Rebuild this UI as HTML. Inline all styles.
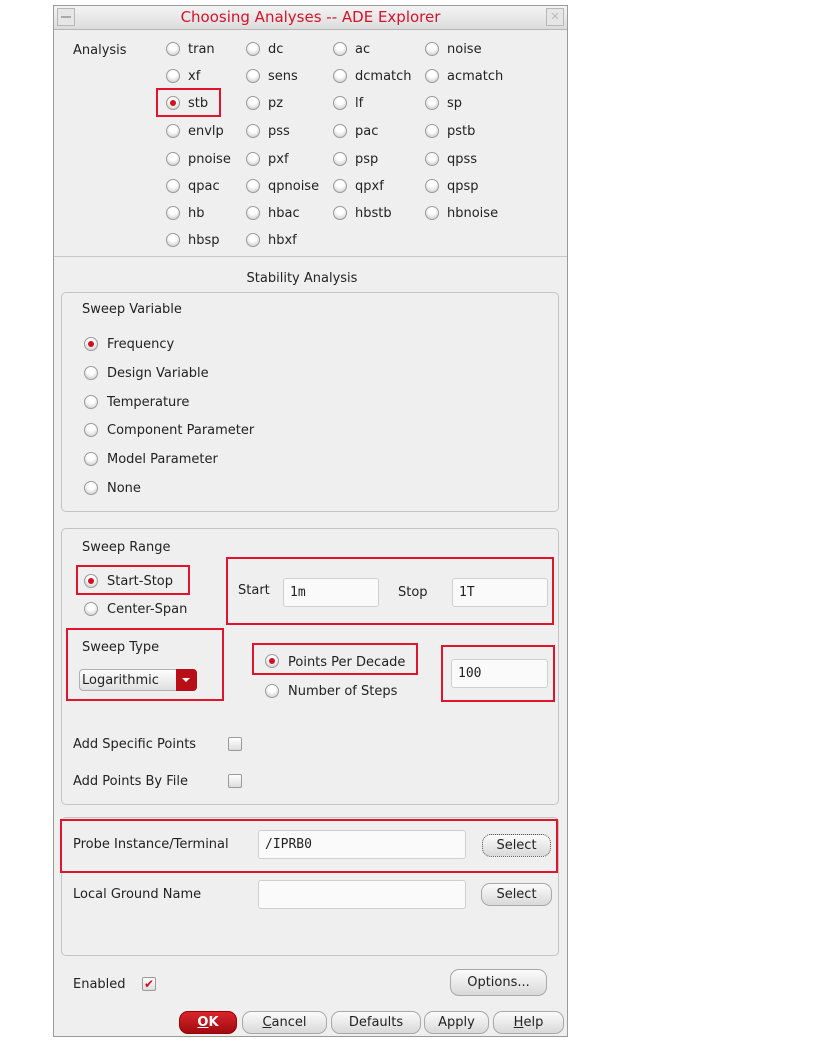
<!DOCTYPE html>
<html><head><meta charset="utf-8"><style>
body{margin:0;width:828px;height:1048px;background:#fff;position:relative;overflow:hidden;font-family:"DejaVu Sans","Liberation Sans",sans-serif;font-size:13px;color:#222}
.win{position:absolute;left:53px;top:5px;width:515px;height:1032px;background:#efefef;border:1px solid #9a9a9a;box-sizing:border-box}
.title{position:absolute;left:0;top:0;width:513px;height:23px;background:linear-gradient(#f4f4f4,#dcdcdc);border-bottom:1px solid #b5b5b5;color:#d4142a;font-size:15px;text-align:center;line-height:23px}
.tb{position:absolute;top:2px;width:18px;height:18px;border:1px solid #b8b8b8;background:#e6e6e6;box-sizing:border-box}
.t{position:absolute;white-space:nowrap;line-height:15px}
.r{position:absolute;width:14px;height:14px;border-radius:50%;background:radial-gradient(circle at 50% 30%,#fff 35%,#c4c4c4 100%);border:1px solid #9a9a9a;box-sizing:border-box;margin:-1px 0 0 -1px}
.r.s::after{content:"";position:absolute;left:3px;top:3px;width:6px;height:6px;border-radius:50%;background:#d0101c}
.grp{position:absolute;border:1px solid #c4c4c4;border-radius:5px;box-sizing:border-box}
.red{position:absolute;border:2px solid #e0142c;box-sizing:border-box}
.in{position:absolute;background:#fafafa;border:1px solid #cfcfcf;border-radius:3px;box-sizing:border-box;font-family:"DejaVu Sans Mono","Liberation Mono",monospace;font-size:13px;padding:0 0 0 6px}
.btn{position:absolute;height:23px;border:1px solid #a8a8a8;border-radius:9px;background:linear-gradient(#fbfbfb,#d9d9d9);box-sizing:border-box;text-align:center;line-height:21px}
.cb{position:absolute;width:14px;height:14px;border:1px solid #9a9a9a;border-radius:2px;background:linear-gradient(#fff,#ddd);box-sizing:border-box}
</style></head><body>
<div class="win">
<div class="title">Choosing Analyses -- ADE Explorer</div>
<div class="tb" style="left:3px"><div style="position:absolute;left:3px;top:7px;width:10px;height:2px;background:#aaa"></div></div>
<div class="tb" style="left:492px;color:#bbb;font-size:11px;text-align:center;line-height:16px">✕</div>
</div>

<div class="t" style="left:73px;top:43px">Analysis</div>
<div class="r" style="left:167px;top:43px"></div><div class="t" style="left:188px;top:42px">tran</div>
<div class="r" style="left:167px;top:70px"></div><div class="t" style="left:188px;top:69px">xf</div>
<div class="r s" style="left:167px;top:97px"></div><div class="t" style="left:188px;top:96px">stb</div>
<div class="r" style="left:167px;top:125px"></div><div class="t" style="left:188px;top:124px">envlp</div>
<div class="r" style="left:167px;top:153px"></div><div class="t" style="left:188px;top:152px">pnoise</div>
<div class="r" style="left:167px;top:180px"></div><div class="t" style="left:188px;top:179px">qpac</div>
<div class="r" style="left:167px;top:207px"></div><div class="t" style="left:188px;top:206px">hb</div>
<div class="r" style="left:167px;top:234px"></div><div class="t" style="left:188px;top:233px">hbsp</div>
<div class="red" style="left:156px;top:88px;width:65px;height:29px"></div>
<div class="r" style="left:247px;top:43px"></div><div class="t" style="left:268px;top:42px">dc</div>
<div class="r" style="left:247px;top:70px"></div><div class="t" style="left:268px;top:69px">sens</div>
<div class="r" style="left:247px;top:97px"></div><div class="t" style="left:268px;top:96px">pz</div>
<div class="r" style="left:247px;top:125px"></div><div class="t" style="left:268px;top:124px">pss</div>
<div class="r" style="left:247px;top:153px"></div><div class="t" style="left:268px;top:152px">pxf</div>
<div class="r" style="left:247px;top:180px"></div><div class="t" style="left:268px;top:179px">qpnoise</div>
<div class="r" style="left:247px;top:207px"></div><div class="t" style="left:268px;top:206px">hbac</div>
<div class="r" style="left:247px;top:234px"></div><div class="t" style="left:268px;top:233px">hbxf</div>
<div class="r" style="left:334px;top:43px"></div><div class="t" style="left:355px;top:42px">ac</div>
<div class="r" style="left:334px;top:70px"></div><div class="t" style="left:355px;top:69px">dcmatch</div>
<div class="r" style="left:334px;top:97px"></div><div class="t" style="left:355px;top:96px">lf</div>
<div class="r" style="left:334px;top:125px"></div><div class="t" style="left:355px;top:124px">pac</div>
<div class="r" style="left:334px;top:153px"></div><div class="t" style="left:355px;top:152px">psp</div>
<div class="r" style="left:334px;top:180px"></div><div class="t" style="left:355px;top:179px">qpxf</div>
<div class="r" style="left:334px;top:207px"></div><div class="t" style="left:355px;top:206px">hbstb</div>
<div class="r" style="left:426px;top:43px"></div><div class="t" style="left:447px;top:42px">noise</div>
<div class="r" style="left:426px;top:70px"></div><div class="t" style="left:447px;top:69px">acmatch</div>
<div class="r" style="left:426px;top:97px"></div><div class="t" style="left:447px;top:96px">sp</div>
<div class="r" style="left:426px;top:125px"></div><div class="t" style="left:447px;top:124px">pstb</div>
<div class="r" style="left:426px;top:153px"></div><div class="t" style="left:447px;top:152px">qpss</div>
<div class="r" style="left:426px;top:180px"></div><div class="t" style="left:447px;top:179px">qpsp</div>
<div class="r" style="left:426px;top:207px"></div><div class="t" style="left:447px;top:206px">hbnoise</div>

<div style="position:absolute;left:54px;top:256px;width:513px;height:1px;background:#c8c8c8"></div>
<div class="t" style="left:54px;width:496px;text-align:center;top:271px">Stability Analysis</div>

<div class="grp" style="left:61px;top:292px;width:498px;height:220px"></div>
<div class="t" style="left:82px;top:302px">Sweep Variable</div>
<div class="r s" style="left:85px;top:338px"></div><div class="t" style="left:107px;top:337px">Frequency</div>
<div class="r" style="left:85px;top:367px"></div><div class="t" style="left:107px;top:366px">Design Variable</div>
<div class="r" style="left:85px;top:396px"></div><div class="t" style="left:107px;top:395px">Temperature</div>
<div class="r" style="left:85px;top:424px"></div><div class="t" style="left:107px;top:423px">Component Parameter</div>
<div class="r" style="left:85px;top:453px"></div><div class="t" style="left:107px;top:452px">Model Parameter</div>
<div class="r" style="left:85px;top:482px"></div><div class="t" style="left:107px;top:481px">None</div>

<div class="grp" style="left:61px;top:528px;width:498px;height:277px"></div>
<div class="t" style="left:82px;top:540px">Sweep Range</div>
<div class="r s" style="left:85px;top:575px"></div><div class="t" style="left:107px;top:574px">Start-Stop</div>
<div class="r" style="left:85px;top:603px"></div><div class="t" style="left:107px;top:602px">Center-Span</div>
<div class="red" style="left:76px;top:565px;width:114px;height:30px"></div>
<div class="red" style="left:226px;top:557px;width:328px;height:68px"></div>
<div class="t" style="left:238px;top:583px">Start</div>
<div class="in" style="left:283px;top:578px;width:96px;height:29px;line-height:27px">1m</div>
<div class="t" style="left:398px;top:585px">Stop</div>
<div class="in" style="left:452px;top:578px;width:96px;height:29px;line-height:27px">1T</div>
<div class="red" style="left:66px;top:628px;width:158px;height:73px"></div>
<div class="t" style="left:82px;top:640px">Sweep Type</div>
<div style="position:absolute;left:79px;top:669px;width:118px;height:22px;border:1px solid #b0b0b0;border-radius:4px;background:linear-gradient(#fdfdfd,#e0e0e0);box-sizing:border-box"></div>
<div class="t" style="left:82px;top:673px">Logarithmic</div>
<div style="position:absolute;left:176px;top:669px;width:21px;height:22px;background:#b80e18;border-radius:0 4px 4px 0"></div>
<div style="position:absolute;left:182px;top:678px;width:0;height:0;border-left:4px solid transparent;border-right:4px solid transparent;border-top:4px solid #fff"></div>
<div class="red" style="left:252px;top:643px;width:166px;height:32px"></div>
<div class="r s" style="left:266px;top:655px"></div><div class="t" style="left:288px;top:655px">Points Per Decade</div>
<div class="r" style="left:266px;top:685px"></div><div class="t" style="left:288px;top:684px">Number of Steps</div>
<div class="red" style="left:441px;top:645px;width:114px;height:57px"></div>
<div class="in" style="left:451px;top:659px;width:97px;height:29px;line-height:27px">100</div>
<div class="t" style="left:73px;top:737px">Add Specific Points</div>
<div class="cb" style="left:228px;top:737px"></div>
<div class="t" style="left:73px;top:774px">Add Points By File</div>
<div class="cb" style="left:228px;top:774px"></div>

<div class="grp" style="left:61px;top:817px;width:498px;height:139px"></div>
<div class="red" style="left:60px;top:819px;width:498px;height:54px"></div>
<div class="t" style="left:73px;top:837px">Probe Instance/Terminal</div>
<div class="in" style="left:258px;top:830px;width:208px;height:29px;line-height:27px">/IPRB0</div>
<div class="btn" style="left:482px;top:834px;width:69px;border:1px dotted #555">Select</div>
<div class="t" style="left:73px;top:887px">Local Ground Name</div>
<div class="in" style="left:258px;top:880px;width:208px;height:29px"></div>
<div class="btn" style="left:481px;top:883px;width:71px">Select</div>

<div class="t" style="left:73px;top:977px">Enabled</div>
<div class="cb" style="left:142px;top:977px;font-size:12px;color:#d0101c;line-height:12px;text-align:center">✔</div>
<div class="btn" style="left:450px;top:969px;width:97px;height:27px;line-height:25px">Options...</div>
<div class="btn" style="left:179px;top:1011px;width:58px;background:linear-gradient(#d8262c,#a00a10);color:#fff;font-weight:bold;border-color:#900"><u>O</u>K</div>
<div class="btn" style="left:242px;top:1011px;width:85px"><u>C</u>ancel</div>
<div class="btn" style="left:331px;top:1011px;width:90px">Defaults</div>
<div class="btn" style="left:424px;top:1011px;width:65px">Apply</div>
<div class="btn" style="left:493px;top:1011px;width:71px"><u>H</u>elp</div>
</body></html>
